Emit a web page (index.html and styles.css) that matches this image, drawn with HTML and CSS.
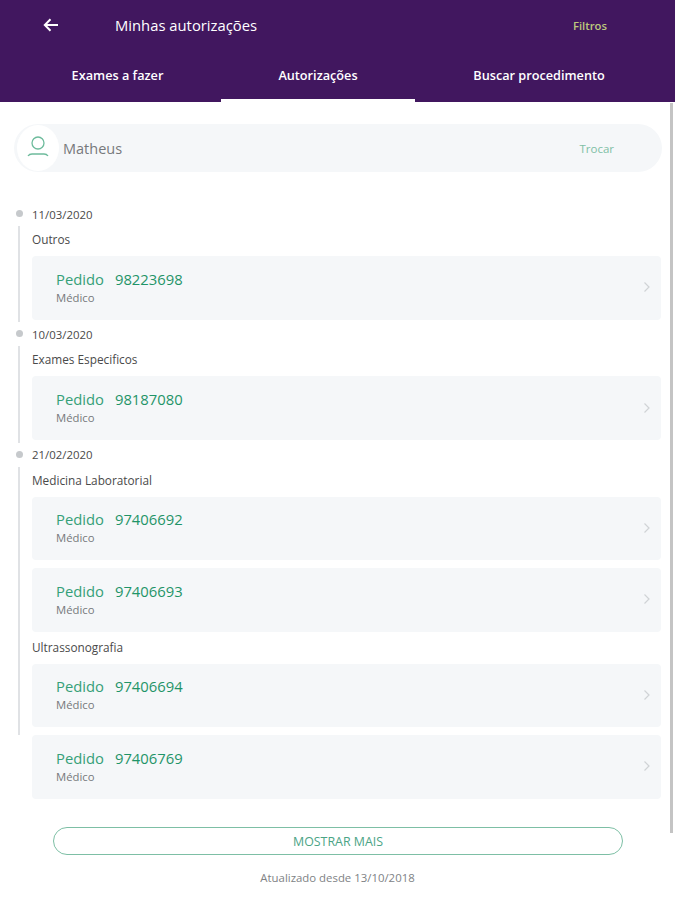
FILE: index.html

```html
<!DOCTYPE html>
<html lang="pt-BR">
<head>
    <meta charset="UTF-8">
    <meta name="viewport" content="width=device-width, initial-scale=1.0">
    <title>Minhas autorizações</title>
    <link rel="stylesheet" href="styles.css">
</head>
<body>
    <header class="topbar">
        <div class="title-row">
            <svg class="back" width="16" height="14" viewBox="0 0 16 14"><path d="M15 7H2M7.500 1.200 1.800 7l5.700 5.800" fill="none" stroke="#fff" stroke-width="2"/></svg>
            <h1>Minhas autorizações</h1>
            <a class="filters">Filtros</a>
        </div>
        <nav class="tabs">
            <a class="tab tab-first">Exames a fazer</a>
            <a class="tab tab-active">Autorizações</a>
            <a class="tab tab-last">Buscar procedimento</a>
        </nav>
    </header>

    <div class="scrollbar"></div>

    <main class="content">
        <div class="person">
            <div class="avatar">
                <svg width="22" height="24" viewBox="0 0 22 24"><circle cx="11" cy="7" r="6" fill="none" stroke="#6dbb9c" stroke-width="1.300"/><path d="M1 20c1-1.500 2.500-2 4-2h12c1.500 0 3 .5 4 2" fill="none" stroke="#6dbb9c" stroke-width="1.300"/></svg>
            </div>
            <span class="person-name">Matheus</span>
            <a class="person-change">Trocar</a>
        </div>

        <section class="day">
            <div class="day-date">11/03/2020</div>
            <div class="day-body">
                <div class="category">Outros</div>
                <a class="card"><div><div class="order"><span>Pedido</span><b>98223698</b></div><div class="kind">Médico</div></div><svg class="chev" width="8" height="12" viewBox="0 0 8 12"><path d="m1.500 1.500 4.500 4.500-4.500 4.500" fill="none" stroke="#d0d3d6" stroke-width="1.200"/></svg></a>
            </div>
        </section>

        <section class="day">
            <div class="day-date">10/03/2020</div>
            <div class="day-body">
                <div class="category">Exames Especificos</div>
                <a class="card"><div><div class="order"><span>Pedido</span><b>98187080</b></div><div class="kind">Médico</div></div><svg class="chev" width="8" height="12" viewBox="0 0 8 12"><path d="m1.500 1.500 4.500 4.500-4.500 4.500" fill="none" stroke="#d0d3d6" stroke-width="1.200"/></svg></a>
            </div>
        </section>

        <section class="day">
            <div class="day-date">21/02/2020</div>
            <div class="day-body day-body-last">
                <div class="category">Medicina Laboratorial</div>
                <a class="card"><div><div class="order"><span>Pedido</span><b>97406692</b></div><div class="kind">Médico</div></div><svg class="chev" width="8" height="12" viewBox="0 0 8 12"><path d="m1.500 1.500 4.500 4.500-4.500 4.500" fill="none" stroke="#d0d3d6" stroke-width="1.200"/></svg></a>
                <a class="card"><div><div class="order"><span>Pedido</span><b>97406693</b></div><div class="kind">Médico</div></div><svg class="chev" width="8" height="12" viewBox="0 0 8 12"><path d="m1.500 1.500 4.500 4.500-4.500 4.500" fill="none" stroke="#d0d3d6" stroke-width="1.200"/></svg></a>
                <div class="category category-next">Ultrassonografia</div>
                <a class="card"><div><div class="order"><span>Pedido</span><b>97406694</b></div><div class="kind">Médico</div></div><svg class="chev" width="8" height="12" viewBox="0 0 8 12"><path d="m1.500 1.500 4.500 4.500-4.500 4.500" fill="none" stroke="#d0d3d6" stroke-width="1.200"/></svg></a>
                <a class="card"><div><div class="order"><span>Pedido</span><b>97406769</b></div><div class="kind">Médico</div></div><svg class="chev" width="8" height="12" viewBox="0 0 8 12"><path d="m1.500 1.500 4.500 4.500-4.500 4.500" fill="none" stroke="#d0d3d6" stroke-width="1.200"/></svg></a>
            </div>
        </section>

        <button class="more">MOSTRAR MAIS</button>
        <p class="updated">Atualizado desde 13/10/2018</p>
    </main>
</body>
</html>
```

FILE: styles.css

```css
body {
    margin: 0;
    font-family: 'Open Sans', 'Liberation Sans', sans-serif;
    background: #fff;
    color: #4a4a4a;
    height: 900px;
    overflow: hidden;
    position: relative;
}
.topbar {
    background: #41175f;
    height: 102px;
    color: #fff;
}
.title-row {
    display: flex;
    align-items: center;
    height: 50px;
    padding-left: 43px;
}
.back {
    margin-right: 56px;
}
.title-row h1 {
    margin: 0;
    font-size: 14.800px;
    font-weight: 500;
    flex: 1;
}
.filters {
    font-size: 11.300px;
    font-weight: 600;
    color: #bcc97c;
    margin-right: 68px;
}
.tabs {
    display: flex;
    height: 52px;
}
.tab {
    display: flex;
    align-items: center;
    justify-content: center;
    font-size: 12.700px;
    font-weight: 600;
    padding-bottom: 3px;
    box-sizing: border-box;
}
.tab-first {
    width: 221px;
    padding-left: 14px;
}
.tab-active {
    width: 194px;
    border-bottom: 3px solid #fff;
    padding-bottom: 0;
}
.tab-last {
    width: 248px;
}
.scrollbar {
    position: absolute;
    top: 103px;
    left: 670px;
    width: 3px;
    height: 730px;
    background: #c4c4c4;
}
.content {
    padding: 22px 14px 0 14px;
}
.person {
    display: flex;
    align-items: center;
    height: 48px;
    width: 648px;
    background: #f5f7f9;
    border-radius: 24px;
    margin-bottom: 33px;
}
.avatar {
    width: 42px;
    height: 46px;
    margin-left: 3px;
    border-radius: 50%;
    background: #fff;
    display: flex;
    align-items: center;
    justify-content: center;
    margin-right: 4px;
}
.person-name {
    font-size: 14.500px;
    color: #77797c;
    flex: 1;
}
.person-change {
    font-size: 11.500px;
    color: #7fbfa5;
    margin-right: 48px;
}
.day-date {
    display: flex;
    align-items: center;
    box-sizing: border-box;
    height: 20px;
    padding: 0 0 2px 17px;
    font-size: 11.400px;
    margin-left: 1px;
    position: relative;
}
.day-date::before {
    content: "";
    position: absolute;
    left: 1px;
    top: 5px;
    width: 7px;
    height: 7px;
    border-radius: 50%;
    background: #c6c9cc;
}
.day-body {
    position: relative;
    padding: 7px 0 5.800px 18px;
}
.day-body::before {
    content: "";
    position: absolute;
    left: 4px;
    top: 1px;
    bottom: 3px;
    width: 2px;
    background: #e0e2e5;
}
.day-body-last::before {
    bottom: 69px;
}
.category {
    font-size: 11.800px;
    line-height: 14px;
    margin-bottom: 10px;
}
.category-next {
    margin-top: 8px;
}
.card {
    display: flex;
    align-items: center;
    justify-content: space-between;
    height: 63.500px;
    width: 629px;
    box-sizing: border-box;
    padding: 0 10px 1px 24px;
    background: #f5f7f9;
    border-radius: 4px;
}
.card + .card {
    margin-top: 8px;
}
.order {
    font-size: 14.800px;
    line-height: 20px;
    color: #35a078;
}
.order b {
    font-weight: 500;
    color: #1f9468;
    margin-left: 11px;
}
.kind {
    font-size: 11.300px;
    line-height: 16px;
    margin-top: 1px;
    color: #77797c;
}
.more {
    display: block;
    width: 570px;
    height: 28.500px;
    margin: 22.500px 0 0 39px;
    background: #fff;
    border: 1px solid #7dbfa5;
    border-radius: 15px;
    font-family: inherit;
    font-size: 12.400px;
    color: #4ba485;
}
.updated {
    margin: 14.500px 0 0;
    text-align: center;
    font-size: 11.400px;
    line-height: 16px;
    color: #808285;
}
```
